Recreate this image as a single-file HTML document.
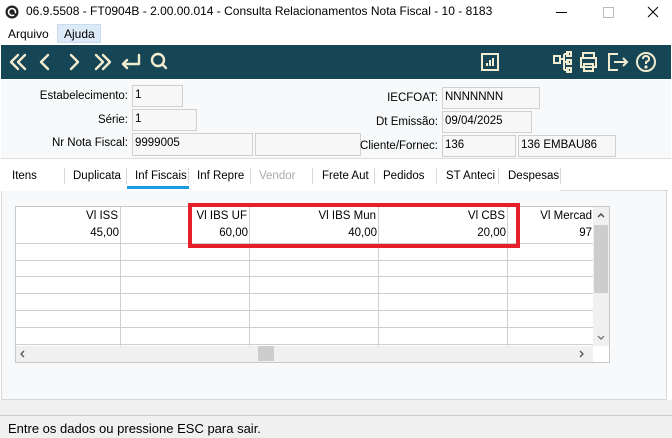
<!DOCTYPE html><html><head><style>
body{margin:0;width:672px;height:438px;overflow:hidden;background:#fff;font-family:"Liberation Sans",sans-serif;font-size:12px;color:#000;position:relative}
.a{position:absolute}
.box{position:absolute;background:#f7f7f7;border:1px solid #d0d0d0;box-sizing:border-box;padding:3px 0 0 2px;font-size:11.5px}
.lbl{position:absolute;text-align:right;font-size:11.5px}
.tab{position:absolute;top:170px;font-size:11.5px;width:53px;overflow:hidden;white-space:nowrap}
.sep{position:absolute;top:168px;width:1px;height:16px;background:#d8d8d8}
.hl{position:absolute;left:16px;width:577px;height:1px;background:#cfcfcf}
.vl{position:absolute;top:207px;width:1px;height:139px;background:#cfcfcf}
.c{position:absolute;text-align:right;font-size:11.5px}
svg{position:absolute}
</style></head><body>
<svg style="left:5px;top:5px" width="14" height="14" viewBox="0 0 14 14"><circle cx="7" cy="7" r="6.5" fill="#222"/><circle cx="7" cy="7" r="3.5" fill="none" stroke="#fff" stroke-width="1.6"/><path d="M7 7 L11 10" stroke="#222" stroke-width="2"/></svg>
<div class="a" style="left:26px;top:4px;font-size:12px">06.9.5508 - FT0904B - 2.00.00.014 - Consulta Relacionamentos Nota Fiscal - 10 - 8183</div>
<div class="a" style="left:556px;top:12px;width:11px;height:1px;background:#000"></div>
<div class="a" style="left:603px;top:7px;width:9px;height:9px;border:1px solid #bbb"></div>
<svg style="left:647px;top:6px" width="12" height="12"><path d="M1 1L11 11M11 1L1 11" stroke="#000" stroke-width="1"/></svg>
<div class="a" style="left:0;top:24px;width:672px;height:20px;background:#fff"></div>
<div class="a" style="left:8px;top:27px">Arquivo</div>
<div class="a" style="left:57px;top:24px;width:44px;height:19px;background:#dce9f6;border:1px solid #c9dcef;box-sizing:border-box"></div>
<div class="a" style="left:64px;top:27px">Ajuda</div>
<div class="a" style="left:1px;top:45px;width:670px;height:34px;background:#164656"></div>
<svg style="left:8px;top:50px" width="165" height="24" viewBox="0 0 165 24" fill="none" stroke="#f1ebcf" stroke-width="2.4" stroke-linecap="round" stroke-linejoin="round">
<path d="M10 5L3 12L10 19M17 5L10 12L17 19"/>
<path d="M40 5L33 12L40 19"/>
<path d="M63 5L70 12L63 19"/>
<path d="M88 5L95 12L88 19M95 5L102 12L95 19"/>
<path d="M131 5V14H115M119 10L115 14L119 18"/>
<circle cx="150" cy="10" r="6"/><path d="M154.5 14.5L158 18"/>
</svg>
<svg style="left:480px;top:52px" width="20" height="20" fill="none" stroke="#f1ebcf" stroke-width="2"><rect x="2" y="2" width="16" height="16"/><path d="M7 14V11M10 14V8M13 14V6"/></svg>
<svg style="left:551px;top:50px" width="110" height="24" fill="none" stroke="#f1ebcf" stroke-width="2">
<rect x="3" y="6" width="6" height="7"/><path d="M9 9H13M13 4V20M13 4H18M13 12H18M13 20H18"/><rect x="16" y="2" width="4" height="4"/><rect x="16" y="10" width="4" height="4"/><rect x="16" y="18" width="4" height="4"/>
<path d="M32 8V3H43V8M30 8H45V17H30ZM33 14H42V21H33Z"/>
<path d="M67 4H58V20H67M63 12H76M72 8L76 12L72 16"/>
<circle cx="95" cy="12" r="9"/><path d="M92 9Q92 6 95 6Q98 6 98 9Q98 11 95 12V14"/><circle cx="95" cy="17" r=".6" fill="#f1ebcf"/>
</svg>
<div class="a" style="left:1px;top:80px;width:670px;height:78px;background:#f7f9fa;border-bottom:1px solid #ddd"></div>
<div class="lbl" style="left:20px;width:108px;top:90px">Estabelecimento:</div>
<div class="box" style="left:132px;top:85px;width:51px;height:22px">1</div>
<div class="lbl" style="left:20px;width:108px;top:114px">Série:</div>
<div class="box" style="left:132px;top:109px;width:65px;height:22px">1</div>
<div class="lbl" style="left:20px;width:108px;top:137px">Nr Nota Fiscal:</div>
<div class="box" style="left:132px;top:133px;width:121px;height:23px">9999005</div>
<div class="box" style="left:255px;top:133px;width:106px;height:23px"></div>
<div class="lbl" style="left:340px;width:98px;top:92px">IECFOAT:</div>
<div class="box" style="left:442px;top:87px;width:98px;height:22px">NNNNNNN</div>
<div class="lbl" style="left:340px;width:98px;top:116px">Dt Emissão:</div>
<div class="box" style="left:442px;top:111px;width:90px;height:22px">09/04/2025</div>
<div class="lbl" style="left:340px;width:98px;top:140px">Cliente/Fornec:</div>
<div class="box" style="left:442px;top:135px;width:74px;height:22px">136</div>
<div class="box" style="left:518px;top:135px;width:98px;height:22px">136 EMBAU86</div>
<div class="tab" style="left:12px">Itens</div>
<div class="sep" style="left:64px"></div><div class="tab" style="left:73px">Duplicata</div>
<div class="sep" style="left:126px"></div><div class="tab" style="left:135px">Inf Fiscais</div>
<div class="a" style="left:127px;top:186px;width:62px;height:3px;background:#1b9ce0"></div>
<div class="sep" style="left:188px"></div><div class="tab" style="left:197px">Inf Repre</div>
<div class="sep" style="left:250px"></div><div class="tab" style="left:259px;color:#aaa">Vendor</div>
<div class="sep" style="left:312px"></div><div class="tab" style="left:322px">Frete Aut</div>
<div class="sep" style="left:374px"></div><div class="tab" style="left:383px">Pedidos</div>
<div class="sep" style="left:436px"></div><div class="tab" style="left:446px">ST Anteci</div>
<div class="sep" style="left:498px"></div><div class="tab" style="left:508px">Despesas</div>
<div class="sep" style="left:560px"></div>
<div class="a" style="left:1px;top:190px;width:666px;height:210px;background:#f7f9fa;border:1px solid #d8d8d8;border-top:none;box-sizing:border-box"></div>
<div class="a" style="left:560px;top:190px;width:108px;height:1px;background:#d8d8d8"></div>
<div class="a" style="left:1px;top:190px;width:559px;height:1px;background:#fff"></div>
<div class="a" style="left:15px;top:206px;width:595px;height:157px;background:#fff;border:1px solid #c8c8c8;box-sizing:border-box"></div>
<div class="vl" style="left:120px"></div><div class="vl" style="left:249px"></div><div class="vl" style="left:378px"></div><div class="vl" style="left:507px"></div>
<div class="hl" style="top:243px"></div><div class="hl" style="top:260px"></div><div class="hl" style="top:276px"></div><div class="hl" style="top:293px"></div><div class="hl" style="top:310px"></div><div class="hl" style="top:327px"></div><div class="hl" style="top:344px"></div>
<div class="c" style="left:20px;width:98px;top:210px">Vl ISS</div><div class="c" style="left:20px;width:99px;top:227px">45,00</div>
<div class="c" style="left:150px;width:97px;top:210px">Vl IBS UF</div><div class="c" style="left:150px;width:98px;top:227px">60,00</div>
<div class="c" style="left:280px;width:96px;top:210px">Vl IBS Mun</div><div class="c" style="left:280px;width:97px;top:227px">40,00</div>
<div class="c" style="left:400px;width:105px;top:210px">Vl CBS</div><div class="c" style="left:400px;width:106px;top:227px">20,00</div>
<div class="c" style="left:510px;width:82px;top:210px">Vl Mercad</div><div class="c" style="left:510px;width:82px;top:227px">97</div>
<div class="a" style="left:593px;top:207px;width:16px;height:139px;background:#f0f0f0"></div>
<div class="a" style="left:594px;top:225px;width:14px;height:68px;background:#cdcdcd"></div>
<svg style="left:596px;top:211px" width="10" height="8"><path d="M2 6L5 3L8 6" stroke="#444" stroke-width="1.4" fill="none"/></svg>
<svg style="left:596px;top:334px" width="10" height="8"><path d="M2 2L5 5L8 2" stroke="#666" stroke-width="1.2" fill="none"/></svg>
<div class="a" style="left:16px;top:346px;width:577px;height:16px;background:#f0f0f0"></div>
<div class="a" style="left:258px;top:346px;width:16px;height:15px;background:#cdcdcd"></div>
<svg style="left:18px;top:349px" width="8" height="10"><path d="M6 2L3 5L6 8" stroke="#555" stroke-width="1.3" fill="none"/></svg>
<svg style="left:450px;top:349px;left:449px" width="0" height="0"></svg>
<svg style="left:450px;top:349px;left:450px" width="0" height="0"></svg>
<svg style="left:450px;top:349px;left:450px" width="0" height="0"></svg>
<svg style="left:451px;top:349px;left:451px" width="0" height="0"></svg>
<svg style="left:450px;top:349px;left:450px" width="0" height="0"></svg>
<svg style="left:450px;top:349px;left:450px" width="0" height="0"></svg>
<svg style="left:450px;top:349px;left:450px" width="0" height="0"></svg>
<svg style="left:450px;top:349px;left:450px" width="0" height="0"></svg>
<svg style="left:450px;top:349px;left:450px" width="0" height="0"></svg>
<svg style="left:450px;top:349px;left:450px" width="0" height="0"></svg>
<svg style="left:450px;top:349px;left:450px" width="0" height="0"></svg>
<svg style="left:450px;top:349px;left:450px" width="0" height="0"></svg>
<svg style="left:450px;top:349px;left:450px" width="0" height="0"></svg>
<svg style="left:450px;top:349px;left:450px" width="0" height="0"></svg>
<svg style="left:450px;top:349px;left:450px" width="0" height="0"></svg>
<svg style="left:450px;top:349px;left:450px" width="0" height="0"></svg>
<svg style="left:450px;top:349px;left:450px" width="0" height="0"></svg>
<svg style="left:450px;top:349px;left:450px" width="0" height="0"></svg>
<svg style="left:450px;top:349px;left:450px" width="0" height="0"></svg>
<svg style="left:450px;top:349px;left:450px" width="0" height="0"></svg>
<svg style="left:450px;top:349px;left:450px" width="0" height="0"></svg>
<svg style="left:450px;top:349px;left:450px" width="0" height="0"></svg>
<svg style="left:578px;top:349px" width="8" height="10"><path d="M2 2L5 5L2 8" stroke="#555" stroke-width="1.3" fill="none"/></svg>
<div class="a" style="left:188px;top:203px;width:332px;height:45px;border:4px solid #e5202a;box-sizing:border-box"></div>
<div class="a" style="left:0;top:400px;width:672px;height:38px;background:#f0f0f0"></div>
<div class="a" style="left:0;top:415px;width:672px;height:1px;background:#ccc"></div>
<div class="a" style="left:8px;top:421px;font-size:13px">Entre os dados ou pressione ESC para sair.</div>
</body></html>
